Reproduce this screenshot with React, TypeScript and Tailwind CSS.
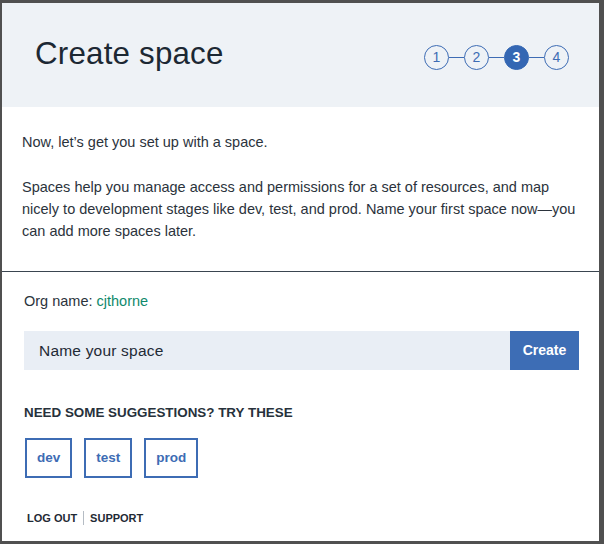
const steps = [1, 2, 3, 4];
const suggestions = ["dev", "test", "prod"];

const Stepper = ({ active }: { active: number }) => {
  return (
    <div className="flex items-center">
      {steps.map((n, i) => (
        <div key={n} className="flex items-center">
          {i > 0 && <div className="w-[15px] h-px bg-[#3d6cb4]" />}
          <div
            className={
              n === active
                ? "w-[25px] h-[25px] rounded-full bg-[#3467b3] border border-[#3467b3] text-white font-bold flex items-center justify-center text-[14px]"
                : "w-[25px] h-[25px] rounded-full border border-[#3d6cb4] text-[#3d6cb4] flex items-center justify-center text-[14px]"
            }
          >
            {n}
          </div>
        </div>
      ))}
    </div>
  );
};

export default function App() {
  return (
    <div
      className="w-[604px] h-[544px] bg-[#505050] pt-[3px] pl-[2px] pr-[5px] pb-[3px]"
      style={{ fontFamily: '"Liberation Sans", Arial, sans-serif' }}
    >
      <div className="h-full bg-white flex flex-col">
        <header className="h-[104px] bg-[#eef2f6] flex items-center justify-between pl-[33px] pr-[30px]">
          <h1 className="text-[31.3px] text-[#1c2833] tracking-[0.2px] pb-[2px]">
            Create space
          </h1>
          <div className="pt-[4px]">
            <Stepper active={3} />
          </div>
        </header>

        <section className="px-[20px] pt-[24px] pb-[29px] text-[14.5px] leading-[22px] text-[#2b333c]">
          <p>Now, let’s get you set up with a space.</p>
          <p className="mt-[23px]">
            Spaces help you manage access and permissions for a set of resources, and map
            nicely to development stages like dev, test, and prod. Name your first space
            now—you can add more spaces later.
          </p>
        </section>

        <div className="h-px bg-[#3a4550]" />

        <section className="px-[22px] pt-[18px]">
          <p className="text-[14.5px] leading-[22px] text-[#2b333c]">
            Org name: <span className="text-[#0f8a6c]">cjthorne</span>
          </p>

          <div className="mt-[19px] flex h-[39px] w-[555px]">
            <div className="flex-1 bg-[#e9eef5] flex items-center pl-[15px] text-[15.5px] text-[#1f2a35] tracking-[0.2px]">
              Name your space
            </div>
            <button className="w-[69px] bg-[#3d6db5] text-white font-bold text-[14px] flex items-center justify-center">
              Create
            </button>
          </div>

          <h2 className="mt-[34px] text-[13.4px] leading-[18px] font-bold text-[#27313b]">
            NEED SOME SUGGESTIONS? TRY THESE
          </h2>

          <div className="mt-[16px] flex gap-[12px] ml-[1px]">
            {suggestions.map((s) => (
              <button
                key={s}
                className="h-[40px] px-[10px] border-2 border-[#3d6cb4] text-[#3d6cb4] font-bold text-[13.5px] flex items-center justify-center"
              >
                {s}
              </button>
            ))}
          </div>

          <div className="mt-[32px] flex items-center text-[11px] leading-[16px] font-bold text-[#1f2a35]">
            <span className="ml-[3px]">LOG OUT</span>
            <span className="mx-[6px] h-[14px] w-px bg-[#b5bcc4]" />
            <span>SUPPORT</span>
          </div>
        </section>
      </div>
    </div>
  );
}
